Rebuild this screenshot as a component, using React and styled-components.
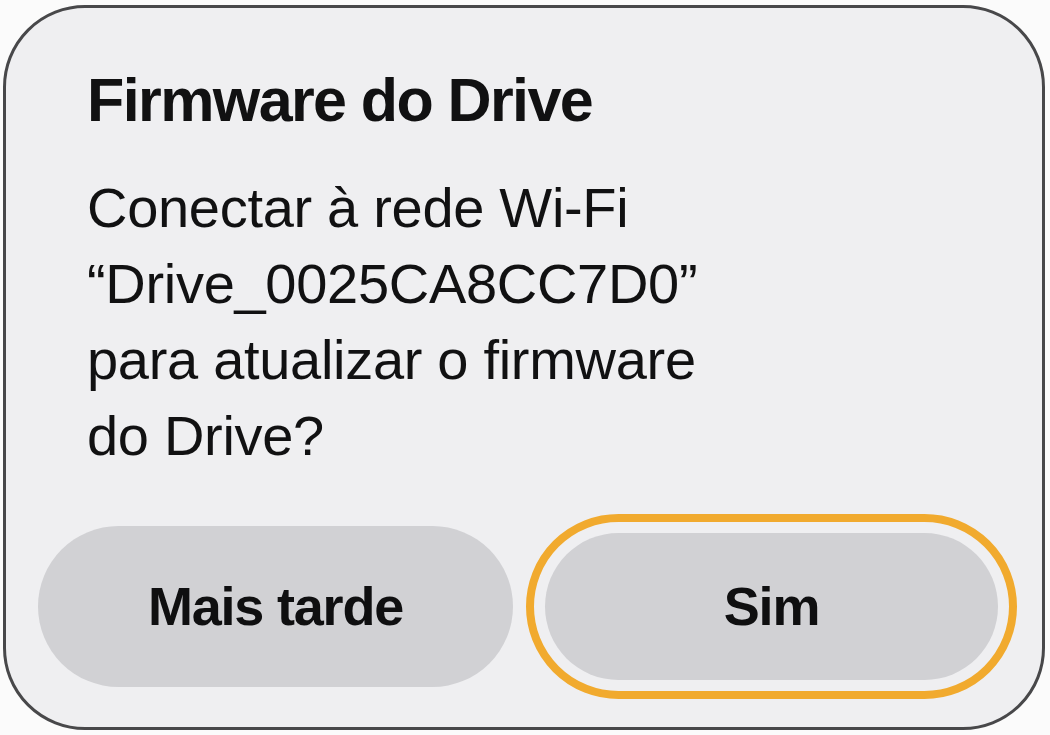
import React from 'react';
import styled, { createGlobalStyle } from 'styled-components';

const GlobalStyle = createGlobalStyle`
  html, body {
    margin: 0;
    padding: 0;
    background: #fbfbfb;
  }
  * {
    box-sizing: border-box;
  }
`;

export default function App() {
  return (
    <>
      <GlobalStyle />
      <Dialog role='dialog' aria-labelledby='fw-title'>
        <Content>
          <Title id='fw-title'>Firmware do Drive</Title>
          <Message>
            Conectar à rede Wi-Fi
            <br />
            “Drive_0025CA8CC7D0”
            <br />
            para atualizar o firmware
            <br />
            do Drive?
          </Message>
        </Content>
        <Actions>
          <PillButton>Mais tarde</PillButton>
          <FocusRing>
            <PillButton $primary>Sim</PillButton>
          </FocusRing>
        </Actions>
      </Dialog>
    </>
  );
}

const Dialog = styled.section`
  margin: 5px 0 0 3px;
  width: 1042px;
  height: 725px;
  border: 3px solid #48484a;
  border-radius: 82px;
  background: #efeff1;
  display: flex;
  flex-direction: column;
  font-family: 'Liberation Sans', Arial, sans-serif;
  color: #111112;
`;

const Content = styled.div`
  padding: 62px 0 0 81px;
`;

const Title = styled.h2`
  margin: 0;
  font-size: 61px;
  line-height: 61px;
  font-weight: 700;
  letter-spacing: -1.6px;
`;

const Message = styled.p`
  margin: 39px 0 0;
  font-size: 56px;
  line-height: 76px;
  font-weight: 400;
  letter-spacing: -0.3px;
`;

const Actions = styled.div`
  margin-top: 40px;
  padding-left: 32px;
  display: flex;
  align-items: center;
  gap: 13px;
`;

const PillButton = styled.button`
  width: ${({ $primary }) => ($primary ? '453px' : '475px')};
  height: ${({ $primary }) => ($primary ? '147px' : '161px')};
  border: 0;
  border-radius: 999px;
  background: #d1d1d4;
  color: #0f0f10;
  font-family: 'Liberation Sans', Arial, sans-serif;
  font-size: 54px;
  font-weight: 700;
  letter-spacing: -1.2px;
  cursor: pointer;
  display: flex;
  align-items: center;
  justify-content: center;
  padding: 0 0 2px;
`;

const FocusRing = styled.div`
  width: 491px;
  height: 185px;
  border: 8px solid #f1aa2e;
  border-radius: 999px;
  padding: 11px;
  display: flex;
  align-items: center;
  justify-content: center;
`;
